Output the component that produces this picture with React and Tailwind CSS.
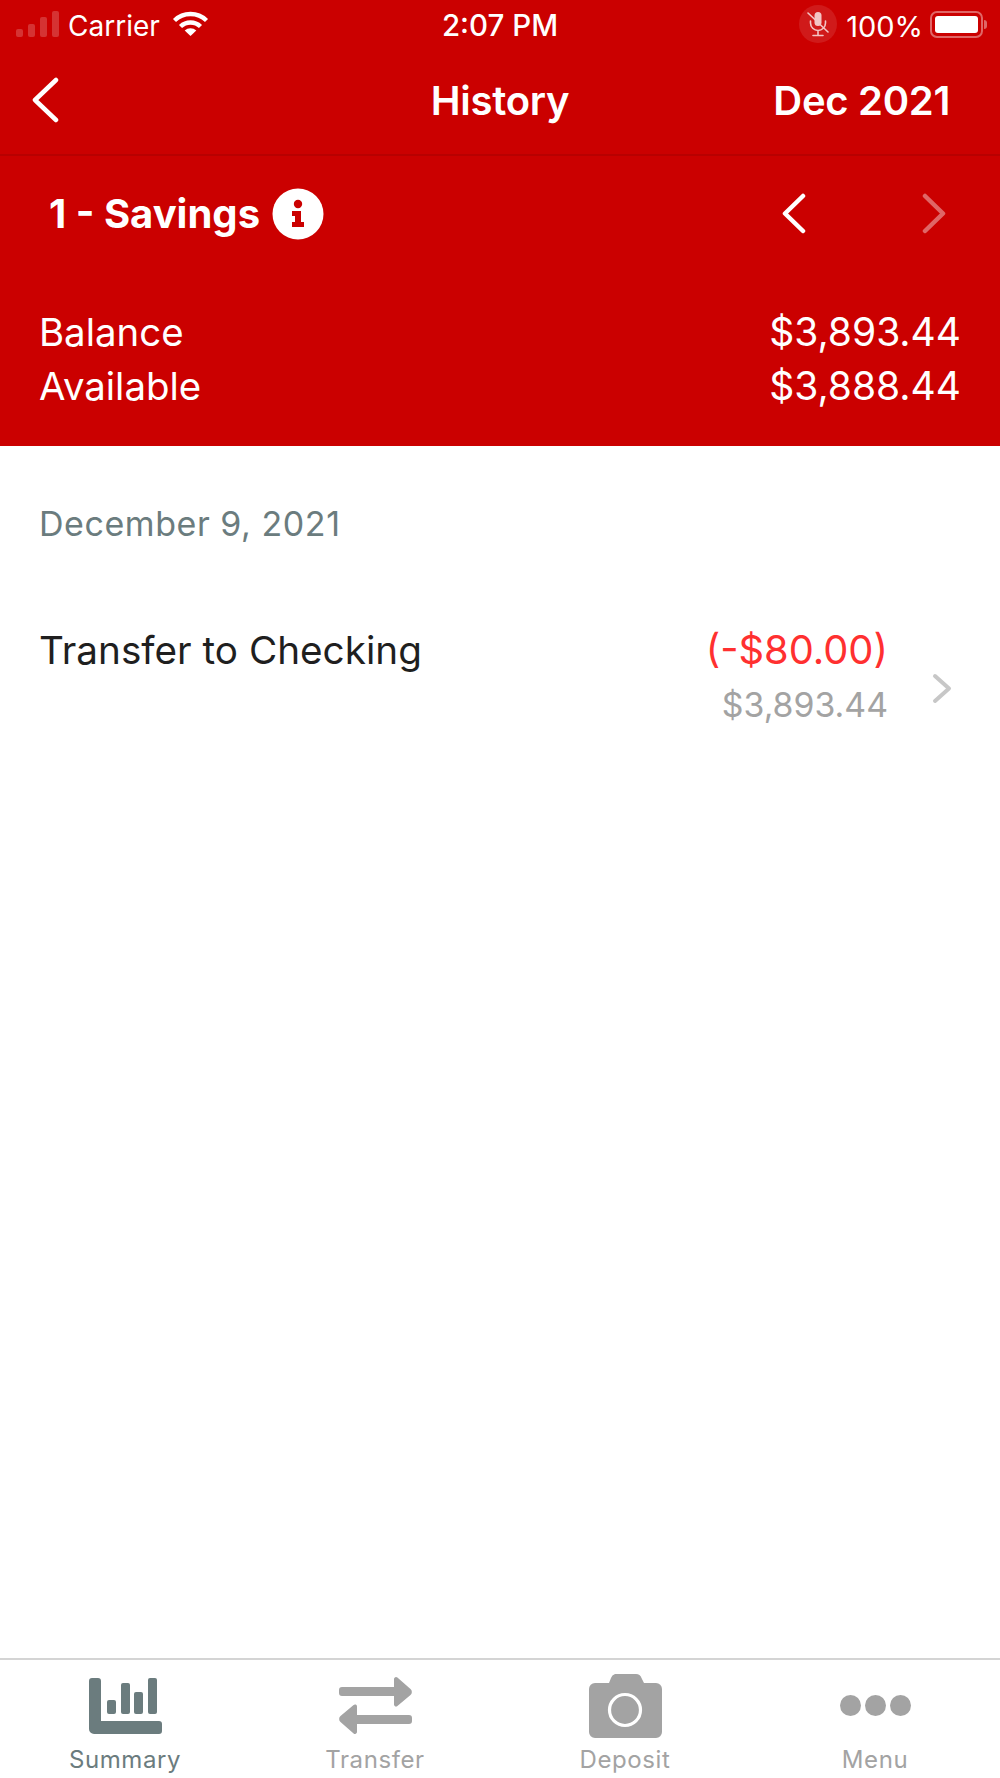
import React from 'react';

const font = { fontFamily: 'Inter, "Noto Sans", sans-serif' };

// chevron used in the header and the row
const Chevron = ({ dir = 'left', className, w = 26, h = 46, sw = 4.5 }) => (
  <svg width={w} height={h} viewBox={`0 0 ${w} ${h}`} className={className} fill="none" stroke="currentColor" strokeWidth={sw} strokeLinecap="round" strokeLinejoin="round">
    {dir === 'left' ? (
      <path d={`M${w - 3} 3 L3 ${h / 2} L${w - 3} ${h - 3}`} />
    ) : (
      <path d={`M3 3 L${w - 3} ${h / 2} L3 ${h - 3}`} />
    )}
  </svg>
);

const StatusBar = () => (
  <div className="relative flex h-[48px] items-center pl-4 pr-[13px] text-white">
    <div className="flex h-[26px] items-end gap-[5px] opacity-20 mt-[-1px]">
      <span className="h-[8px] w-[7px] rounded-[2px] bg-white" />
      <span className="h-[13px] w-[7px] rounded-[2px] bg-white" />
      <span className="h-[20px] w-[7px] rounded-[2px] bg-white" />
      <span className="h-[26px] w-[7px] rounded-[2px] bg-white" />
    </div>
    <span className="ml-[9px] pt-[4px] text-[28px] leading-none">Carrier</span>
    <svg width="37" height="27" viewBox="0 0 37 27" className="ml-[12px] mb-[1px]" fill="none" stroke="white" strokeWidth="4.4">
      <path d="M2.5 10.5 A23 23 0 0 1 34.5 10.5" />
      <path d="M8.5 16.5 A14.5 14.5 0 0 1 28.5 16.5" />
      <path d="M18.5 26 L12.7 20.6 A8.5 8.5 0 0 1 24.3 20.6 Z" fill="white" stroke="none" />
    </svg>
    <span className="absolute left-0 right-0 pt-[4px] text-center text-[29.5px] font-medium leading-none">2:07 PM</span>
    <div className="ml-auto flex items-center">
      <div className="flex h-[38px] w-[38px] items-center justify-center rounded-full bg-white/10">
        <svg width="22" height="26" viewBox="0 0 22 26" fill="none" stroke="white" strokeWidth="1.6" strokeLinecap="round" opacity="0.75">
          <rect x="7.5" y="1" width="7" height="14" rx="3.5" fill="white" stroke="none" />
          <path d="M3.5 10 v2 a7.5 7.5 0 0 0 15 0 v-2 M11 20 v4 M6 24.5 h10" />
          <path d="M1 2 L21 21" />
        </svg>
      </div>
      <span className="ml-[9px] pt-[4px] text-[29px] leading-none">100%</span>
      <div className="ml-[7px] flex items-center">
        <div className="h-[27px] w-[53px] rounded-[7px] border-2 border-white/40 p-[3px]">
          <div className="h-full w-full rounded-[3px] bg-white" />
        </div>
        <span className="ml-[1px] h-[9px] w-[3px] rounded-r-full bg-white/40" />
      </div>
    </div>
  </div>
);

const Header = () => (
  <div className="bg-[#cb0000] text-white">
    <StatusBar />
    <div className="relative flex h-[108px] items-center border-b-2 border-[#b80000] pl-[32px] pr-[50px] pb-[2px]">
      <Chevron dir="left" w={27} h={46} />
      <span className="absolute left-0 right-0 pt-[2px] text-center text-[40px] font-semibold tracking-[-0.3px]">History</span>
      <span className="ml-auto pt-[2px] text-[40px] font-semibold tracking-[-0.3px]">Dec 2021</span>
    </div>
    <div className="flex h-[115px] items-center pl-[49px] pr-[54px]">
      <span className="text-[40px] font-bold tracking-[0px]">1 - Savings</span>
      <svg width="52" height="52" viewBox="0 0 52 52" className="ml-[12px]">
        <circle cx="26" cy="26" r="25.5" fill="white" />
        <circle cx="26" cy="16" r="4.2" fill="#cb0000" />
        <path d="M20 23 h9 v11 h3 v5 h-12 v-5 h3 v-6 h-3 z" fill="#cb0000" />
      </svg>
      <Chevron dir="left" w={24} h={41} className="ml-auto" />
      <Chevron dir="right" w={24} h={41} className="ml-[116px] opacity-40" />
    </div>
    <div className="flex flex-col pl-[39px] pr-[39px] pb-[33px] pt-[34px] text-[38.4px] leading-[54px]">
      <div className="flex justify-between">
        <span>Balance</span>
        <span className="text-[39px]">$3,893.44</span>
      </div>
      <div className="flex justify-between">
        <span>Available</span>
        <span className="text-[39px]">$3,888.44</span>
      </div>
    </div>
  </div>
);

const TransactionRow = () => (
  <div className="flex items-start pl-[39px] pr-[48px] pt-[72px]">
    <span className="text-[38.7px] leading-[54px] text-[#1f1f1f]">Transfer to Checking</span>
    <div className="ml-auto flex flex-col items-end">
      <span className="text-[39.8px] leading-[54px] text-[#ff3030]">(-$80.00)</span>
      <span className="text-[33.8px] leading-[55px] text-[#a3a3a3]">$3,893.44</span>
    </div>
    <Chevron dir="right" w={20} h={31} sw={4} className="ml-[44px] mt-[50px] text-[#c7c7c7]" />
  </div>
);

const tabs = [
  {
    label: 'Summary',
    active: true,
    icon: (
      <svg width="73" height="56" viewBox="0 0 73 56" fill="#6b7c7e">
        <path d="M3 0 h6 a3 3 0 0 1 3 3 v40 h58 a3 3 0 0 1 3 3 v7 a3 3 0 0 1 -3 3 H5 a5 5 0 0 1 -5 -5 V3 a3 3 0 0 1 3 -3 Z" />
        <rect x="18" y="22" width="9" height="14" rx="2" />
        <rect x="32" y="5" width="9" height="31" rx="2" />
        <rect x="45" y="14" width="9" height="22" rx="2" />
        <rect x="59" y="0" width="9" height="36" rx="2" />
      </svg>
    ),
  },
  {
    label: 'Transfer',
    icon: (
      <svg width="73" height="57" viewBox="0 0 73 57" fill="#a3a3a3">
        <path d="M3 10 H55 V2 a2 2 0 0 1 3.4 -1.4 L71.5 12 a4 4 0 0 1 0 6 L58.4 29 A2 2 0 0 1 55 27.5 V19 H3 a3 3 0 0 1 -3 -3 v-3 a3 3 0 0 1 3 -3 Z" />
        <path d="M70 47 H18 V55 a2 2 0 0 1 -3.4 1.4 L1.5 45 a4 4 0 0 1 0 -6 L14.6 28 A2 2 0 0 1 18 29.5 V38 H70 a3 3 0 0 1 3 3 v3 a3 3 0 0 1 -3 3 Z" />
      </svg>
    ),
  },
  {
    label: 'Deposit',
    icon: (
      <svg width="73" height="64" viewBox="0 0 73 64" fill="#a3a3a3">
        <path d="M26 0 h21 a6 6 0 0 1 5.5 4 L55 9 h12 a6 6 0 0 1 6 6 v43 a6 6 0 0 1 -6 6 H6 a6 6 0 0 1 -6 -6 V15 a6 6 0 0 1 6 -6 h14 l2 -5 a6 6 0 0 1 4 -4 Z" />
        <circle cx="36" cy="36" r="15.5" fill="none" stroke="white" strokeWidth="3.2" />
      </svg>
    ),
  },
  {
    label: 'Menu',
    icon: (
      <svg width="71" height="21" viewBox="0 0 71 21" fill="#a3a3a3">
        <circle cx="10.5" cy="10.5" r="10.5" />
        <circle cx="35.5" cy="10.5" r="10.5" />
        <circle cx="60.5" cy="10.5" r="10.5" />
      </svg>
    ),
  },
];

const TabBar = () => (
  <div className="grid h-[120px] grid-cols-4 border-t-2 border-[#d4d4d4]">
    {tabs.map((tab) => (
      <div key={tab.label} className="flex flex-col items-center">
        <div className="flex h-[88px] items-center pt-[3px]">{tab.icon}</div>
        <span className={`text-[24px] leading-[24px] tracking-[0.6px] ${tab.active ? 'text-[#6b7c7e]' : 'text-[#a3a3a3]'}`}>
          {tab.label}
        </span>
      </div>
    ))}
  </div>
);

export default function App() {
  return (
    <div className="flex h-[1778px] w-[1000px] flex-col overflow-hidden bg-white" style={font}>
      <Header />
      <div className="flex-1">
        <div className="pl-[39px] pt-[51px] text-[34px] leading-[54px] tracking-[0.55px] text-[#6b7c7e]">December 9, 2021</div>
        <TransactionRow />
      </div>
      <TabBar />
    </div>
  );
}
